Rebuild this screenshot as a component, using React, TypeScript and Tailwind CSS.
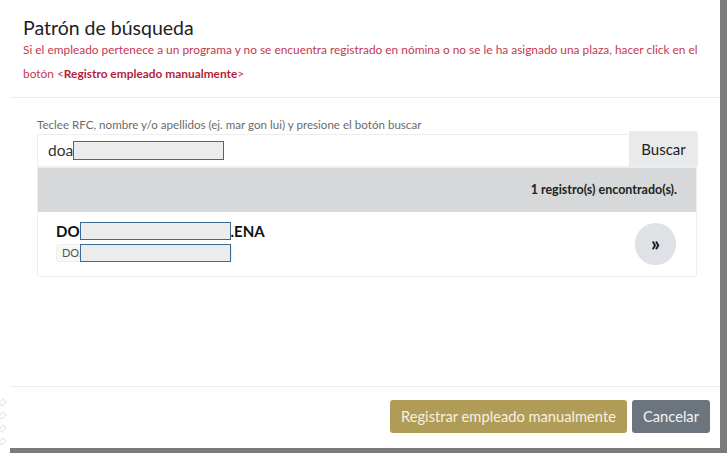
import React from 'react';

const font = { fontFamily: 'Lato, "Open Sans", sans-serif' };

const Redacted = ({ w, h, extra = '' }: { w: string; h: string; extra?: string }) => (
  <span className={`inline-block align-middle bg-[#ececec] border border-[#3f6a94] ${w} ${h} ${extra}`} />
);

const Header = () => (
  <div className="pl-[13px] pr-[10px] pt-[16px] pb-[11px] border-b border-[#ececec]">
    <h1 className="text-[19.5px] leading-[24px] text-[#222]">Patrón de búsqueda</h1>
    <p className="-mt-[2px] text-[11.9px] leading-[24px] text-[#c5384f]">
      Si el empleado pertenece a un programa y no se encuentra registrado en nómina o no se le ha asignado una plaza, hacer click en el
      botón &lt;<b className="font-bold text-[#b31e3a]">Registro empleado manualmente</b>&gt;
    </p>
  </div>
);

const SearchBox = () => (
  <div>
    <div className="text-[11.6px] leading-[12px] text-[#6b6b6b]">
      Teclee RFC, nombre y/o apellidos (ej. mar gon lui) y presione el botón buscar
    </div>
    <div className="flex items-stretch">
      <div className="flex-1 h-[33px] mt-[3px] border border-[#eeeeee] border-r-0 flex items-center pl-[10px] text-[15.5px] text-[#333]">
        doa
        <Redacted w="w-[151px]" h="h-[19px]" />
      </div>
      <button className="w-[69px] h-[36px] bg-[#e9eaeb] text-[15px] text-[#222] rounded-tr-[3px]">Buscar</button>
    </div>
  </div>
);

const ResultCard = () => (
  <div className="mr-px border border-[#eeeeee] rounded-b-[3px]">
    <div className="h-[44px] bg-[#d6d8da] flex items-center justify-end pr-[19px] text-[12.5px] font-bold text-[#222]">
      1 registro(s) encontrado(s).
    </div>
    <div className="h-[64px] flex items-center justify-between pl-[18px] pr-[20px]">
      <div className="flex flex-col mb-[5px]">
        <div className="flex items-center text-[15px] font-bold text-[#111] leading-[20px]">
          DO
          <Redacted w="w-[151px]" h="h-[18px]" />
          .ENA
        </div>
        <div className="mt-[3px] flex items-center">
          <span className="flex items-center h-[18px] pl-[5px] bg-[#f7f7f7] border border-[#eee] rounded-[3px] text-[11px] text-[#555]">
            DO/
            <Redacted w="w-[151px]" h="h-[18px]" extra="-ml-[4px]" />
          </span>
        </div>
      </div>
      <button className="w-[41px] h-[42px] rounded-full bg-[#dee1e5] flex items-center justify-center text-[20px] font-bold text-[#111] leading-none pb-[3px]">
        »
      </button>
    </div>
  </div>
);

const Footer = () => (
  <div className="h-[62px] border-t border-[#ececec] flex items-center justify-end gap-[5px] pr-[10px] pb-[2px]">
    <button className="h-[33px] px-[11px] rounded-[3px] bg-[#b19c57] text-[14.7px] text-[#f6f1e2]">
      Registrar empleado manualmente
    </button>
    <button className="h-[33px] px-[11px] rounded-[3px] bg-[#6c757e] text-[14.7px] text-[#f3f4f5]">Cancelar</button>
  </div>
);

export default function App() {
  return (
    <div className="w-[727px] h-[453px] flex bg-white overflow-hidden" style={font}>
      <div className="w-[10px] flex flex-col justify-end pb-[8px] gap-[6px] items-start">
        <span className="block w-[5px] h-[7px] rotate-45 border border-[#e4e4e4]" />
        <span className="block w-[5px] h-[7px] rotate-45 border border-[#e4e4e4]" />
        <span className="block w-[5px] h-[7px] rotate-45 border border-[#e4e4e4]" />
        <span className="block w-[5px] h-[7px] rotate-45 border border-[#e4e4e4]" />
      </div>
      <div className="flex-1 flex flex-col">
        <div className="flex-1 bg-white flex flex-col">
          <Header />
          <div className="flex-1 pl-[27px] pr-[22px] pt-[21px]">
            <SearchBox />
            <ResultCard />
          </div>
          <Footer />
        </div>
        <div className="h-[5px] bg-[#7b7b7b]" />
      </div>
      <div className="w-[7px] bg-[#7b7b7b]" />
    </div>
  );
}
